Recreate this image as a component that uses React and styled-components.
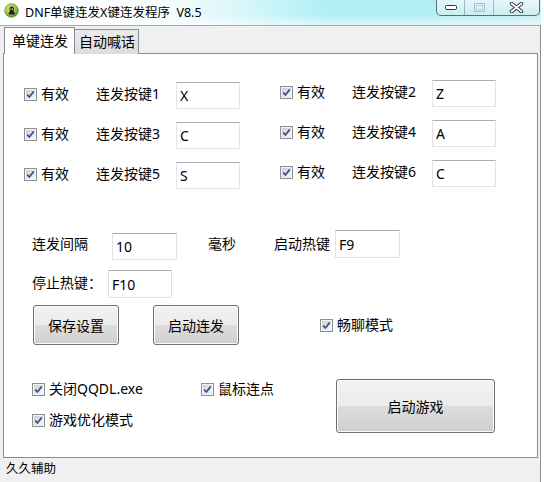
import React from 'react';
import styled, { createGlobalStyle } from 'styled-components';

const GlobalStyle = createGlobalStyle`
  html, body { margin: 0; padding: 0; background: #ffffff; }
  body {
    font-family: "Noto Sans", "Noto Sans CJK SC", sans-serif;
    font-size: 14px;
    color: #000;
  }
  * { box-sizing: border-box; }
`;

const Screen = styled.div`
  width: 544px;
  height: 482px;
  background: #ffffff;
  overflow: hidden;
`;

const Window = styled.div`
  width: 541px;
  height: 482px;
  display: flex;
  flex-direction: column;
`;

const TitleBar = styled.div`
  height: 25px;
  flex: none;
  display: flex;
  align-items: flex-start;
  background:
    linear-gradient(180deg, rgba(255,255,255,0) 55%, rgba(255,255,255,0.55) 100%),
    linear-gradient(90deg, #ffffff 0%, #f7fdfd 30%, #d4f6f9 46%, #b0eff6 60%, #b2eef5 78%, #c6edf2 100%);
`;

const AppIcon = styled.svg`
  flex: none;
  margin: 3px 0 0 4px;
`;

const Title = styled.div`
  margin: 5px 0 0 6px;
  font-size: 12.5px;
  line-height: 15px;
  white-space: pre;
  color: #000;
`;

const Controls = styled.div`
  margin-left: auto;
  margin-right: 1px;
  display: flex;
  height: 16px;
  border: 1px solid #5d6b7d;
  border-top: none;
  border-radius: 0 0 5px 5px;
  overflow: hidden;
  background: linear-gradient(180deg, rgba(255,255,255,0.6), rgba(215,238,243,0.5));
`;

const CtrlBtn = styled.div`
  width: ${(p) => p.$w}px;
  display: flex;
  align-items: center;
  justify-content: center;
  & + & { border-left: 1px solid rgba(90, 110, 130, 0.45); }
`;

const Client = styled.div`
  flex: 1;
  display: flex;
  flex-direction: column;
  background: #f0f0f0;
  border-top: 1px solid #a3aab2;
  border-right: 1px solid #8d9199;
  padding: 1px 2px 0 3px;
  min-height: 0;
`;

const TabStrip = styled.div`
  height: 27px;
  flex: none;
  display: flex;
  align-items: flex-end;
  padding-left: 1px;
`;

const Tab = styled.div`
  position: relative;
  z-index: 1;
  display: flex;
  align-items: center;
  height: ${(p) => (p.$active ? 27 : 25)}px;
  padding: ${(p) => (p.$active ? '0 6px 0 7px' : '0 3px 0 4px')};
  border: 1px solid #898c95;
  border-bottom: none;
  ${(p) => (p.$active ? '' : 'border-left: none;')}
  background: ${(p) => (p.$active ? '#ffffff' : 'linear-gradient(180deg, #ececec, #dcdcdc)')};
  font-size: 14px;
  line-height: 16px;
  white-space: nowrap;
`;

const Panel = styled.div`
  flex: 1;
  margin-top: -1px;
  background: #ffffff;
  border: 1px solid #898c95;
  display: flex;
  flex-direction: column;
`;

const StatusBar = styled.div`
  height: 24px;
  flex: none;
  padding: 3px 0 0 3px;
  font-size: 12.5px;
  line-height: 15px;
  color: #000;
`;

const KeyGrid = styled.div`
  display: flex;
  margin-top: 28px;
  padding-left: 20px;
`;

const KeyColumn = styled.div`
  display: flex;
  flex-direction: column;
  gap: 13px;
  width: 256px;
  margin-top: ${(p) => p.$shift || 0}px;
`;

const KeyRow = styled.div`
  display: flex;
  align-items: flex-start;
  height: 27px;
`;

const CheckItem = styled.label`
  display: flex;
  align-items: center;
  flex: none;
  width: ${(p) => (p.$w ? `${p.$w}px` : 'auto')};
  margin-top: ${(p) => p.$mt || 0}px;
  margin-left: ${(p) => p.$ml || 0}px;
  line-height: 16px;
  white-space: nowrap;
`;

const Box = styled.span`
  flex: none;
  width: 13px;
  height: 13px;
  border: 1px solid #8f8f8f;
  background: #f4f4f4;
  display: flex;
  align-items: center;
  justify-content: center;
  margin-right: 4px;
  & > svg { display: block; }
`;

const BoxInner = styled.span`
  width: 11px;
  height: 11px;
  border: 1px solid #f4f4f4;
  background: linear-gradient(135deg, #c9ced6 0%, #e2e5ea 55%, #f6f7f9 100%);
  display: flex;
  align-items: center;
  justify-content: center;
`;

const Label = styled.span`
  flex: none;
  width: ${(p) => p.$w}px;
  margin-top: ${(p) => p.$mt || 0}px;
  margin-left: ${(p) => p.$ml || 0}px;
  line-height: 16px;
  white-space: nowrap;
`;

const TextBox = styled.input`
  flex: none;
  width: ${(p) => p.$w}px;
  height: ${(p) => p.$h || 27}px;
  margin-top: ${(p) => p.$mt || 0}px;
  margin-left: ${(p) => p.$ml || 0}px;
  border: 1px solid #e2e3ea;
  border-top-color: #abadb3;
  background: #ffffff;
  padding: 0 0 0 3px;
  font: inherit;
  font-size: 14px;
  color: #000;
  outline: none;
`;

const FormRow = styled.div`
  display: flex;
  align-items: ${(p) => (p.$center ? 'center' : 'flex-start')};
  padding-left: ${(p) => p.$pl}px;
  margin-top: ${(p) => p.$mt}px;
`;

const Button = styled.button`
  flex: none;
  width: ${(p) => p.$w}px;
  height: ${(p) => p.$h}px;
  margin-left: ${(p) => p.$ml || 0}px;
  border: 1px solid #707070;
  border-radius: 3px;
  background: linear-gradient(180deg, #f2f2f2 0%, #ebebeb 50%, #dddddd 50%, #cfcfcf 100%);
  box-shadow: inset 0 0 0 1px #fcfcfc;
  font: inherit;
  font-size: 14px;
  color: #000;
  padding: 0;
`;

const CheckColumn = styled.div`
  width: 304px;
  flex: none;
  display: flex;
  flex-direction: column;
  gap: 15px;
  padding-top: 2px;
`;

const CheckLine = styled.div`
  display: flex;
`;

function Check({ children, w, mt, ml }) {
  return (
    <CheckItem $w={w} $mt={mt} $ml={ml}>
      <Box>
        <BoxInner>
          <svg width="9" height="9" viewBox="0 0 9 9">
            <path d="M1.2 4.6 L3.4 7 L7.8 1.4" fill="none" stroke="#3b4f86" strokeWidth="1.7" strokeLinejoin="round" />
          </svg>
        </BoxInner>
      </Box>
      <span>{children}</span>
    </CheckItem>
  );
}

function KeyItem({ n, value }) {
  return (
    <KeyRow>
      <Check w={72} mt={4}>有效</Check>
      <Label $w={80} $mt={4}>连发按键{n}</Label>
      <TextBox $w={64} readOnly value={value} />
    </KeyRow>
  );
}

export default function App() {
  return (
    <>
      <GlobalStyle />
      <Screen>
        <Window>
          <TitleBar>
            <AppIcon width="15" height="15" viewBox="0 0 15 15">
              <defs>
                <radialGradient id="ig" cx="40%" cy="35%" r="70%">
                  <stop offset="0%" stopColor="#f2e56a" />
                  <stop offset="60%" stopColor="#9cc23c" />
                  <stop offset="100%" stopColor="#3f8a34" />
                </radialGradient>
              </defs>
              <circle cx="7.5" cy="7.5" r="6.8" fill="url(#ig)" stroke="#4d7d2c" strokeWidth="0.6" />
              <path d="M7.6 3.6 C9.4 3.6 10.2 5 10 6.4 C9.9 7.3 9.4 7.9 9.2 8.3 C10.3 9 11 10.2 11 11.6 L4.6 11.6 C4.6 10.2 5.2 9 6.2 8.3 C5.8 7.8 5.4 7.2 5.4 6.2 C5.4 4.8 6.2 3.6 7.6 3.6 Z" fill="#1d2330" />
              <circle cx="6.9" cy="6.1" r="0.7" fill="#ffffff" />
              <circle cx="8.6" cy="6.1" r="0.7" fill="#ffffff" />
            </AppIcon>
            <Title>{'DNF单键连发X键连发程序  V8.5'}</Title>
            <Controls>
              <CtrlBtn $w={27}>
                <svg width="12" height="5" viewBox="0 0 12 5">
                  <rect x="0.5" y="0.5" width="11" height="4" rx="1" fill="#ffffff" stroke="#2c3440" />
                </svg>
              </CtrlBtn>
              <CtrlBtn $w={29}>
                <svg width="11" height="9" viewBox="0 0 11 9">
                  <rect x="0.5" y="0.5" width="10" height="8" fill="none" stroke="#a9bcc6" />
                  <rect x="2.5" y="2.5" width="6" height="4" fill="none" stroke="#c3d2d8" />
                </svg>
              </CtrlBtn>
              <CtrlBtn $w={46}>
                <svg width="15" height="11" viewBox="0 0 15 11">
                  <path d="M2.5 1.5 L12.5 9.5 M12.5 1.5 L2.5 9.5" stroke="#2c3440" strokeWidth="3.6" strokeLinecap="round" />
                  <path d="M2.5 1.5 L12.5 9.5 M12.5 1.5 L2.5 9.5" stroke="#ffffff" strokeWidth="1.8" strokeLinecap="round" />
                </svg>
              </CtrlBtn>
            </Controls>
          </TitleBar>
          <Client>
            <TabStrip>
              <Tab $active>单键连发</Tab>
              <Tab>自动喊话</Tab>
            </TabStrip>
            <Panel>
              <KeyGrid>
                <KeyColumn>
                  <KeyItem n={1} value="X" />
                  <KeyItem n={3} value="C" />
                  <KeyItem n={5} value="S" />
                </KeyColumn>
                <KeyColumn $shift={-2}>
                  <KeyItem n={2} value="Z" />
                  <KeyItem n={4} value="A" />
                  <KeyItem n={6} value="C" />
                </KeyColumn>
              </KeyGrid>

              <FormRow $pl={28} $mt={41}>
                <Label $w={80} $mt={6}>连发间隔</Label>
                <TextBox $w={65} $mt={3} readOnly value="10" />
                <Label $w={66} $ml={31} $mt={6}>毫秒</Label>
                <Label $w={61} $mt={6}>启动热键</Label>
                <TextBox $w={65} $h={28} readOnly value="F9" />
              </FormRow>

              <FormRow $pl={28} $mt={10}>
                <Label $w={76} $mt={5}>停止热键：</Label>
                <TextBox $w={64} $h={28} readOnly value="F10" />
              </FormRow>

              <FormRow $pl={29} $mt={7} $center>
                <Button $w={86} $h={40}>保存设置</Button>
                <Button $w={86} $h={40} $ml={34}>启动连发</Button>
                <Check ml={81}>畅聊模式</Check>
              </FormRow>

              <FormRow $pl={28} $mt={34}>
                <CheckColumn>
                  <CheckLine>
                    <Check w={169}>关闭QQDL.exe</Check>
                    <Check>鼠标连点</Check>
                  </CheckLine>
                  <CheckLine>
                    <Check>游戏优化模式</Check>
                  </CheckLine>
                </CheckColumn>
                <Button $w={159} $h={54}>启动游戏</Button>
              </FormRow>
            </Panel>
            <StatusBar>久久辅助</StatusBar>
          </Client>
        </Window>
      </Screen>
    </>
  );
}
